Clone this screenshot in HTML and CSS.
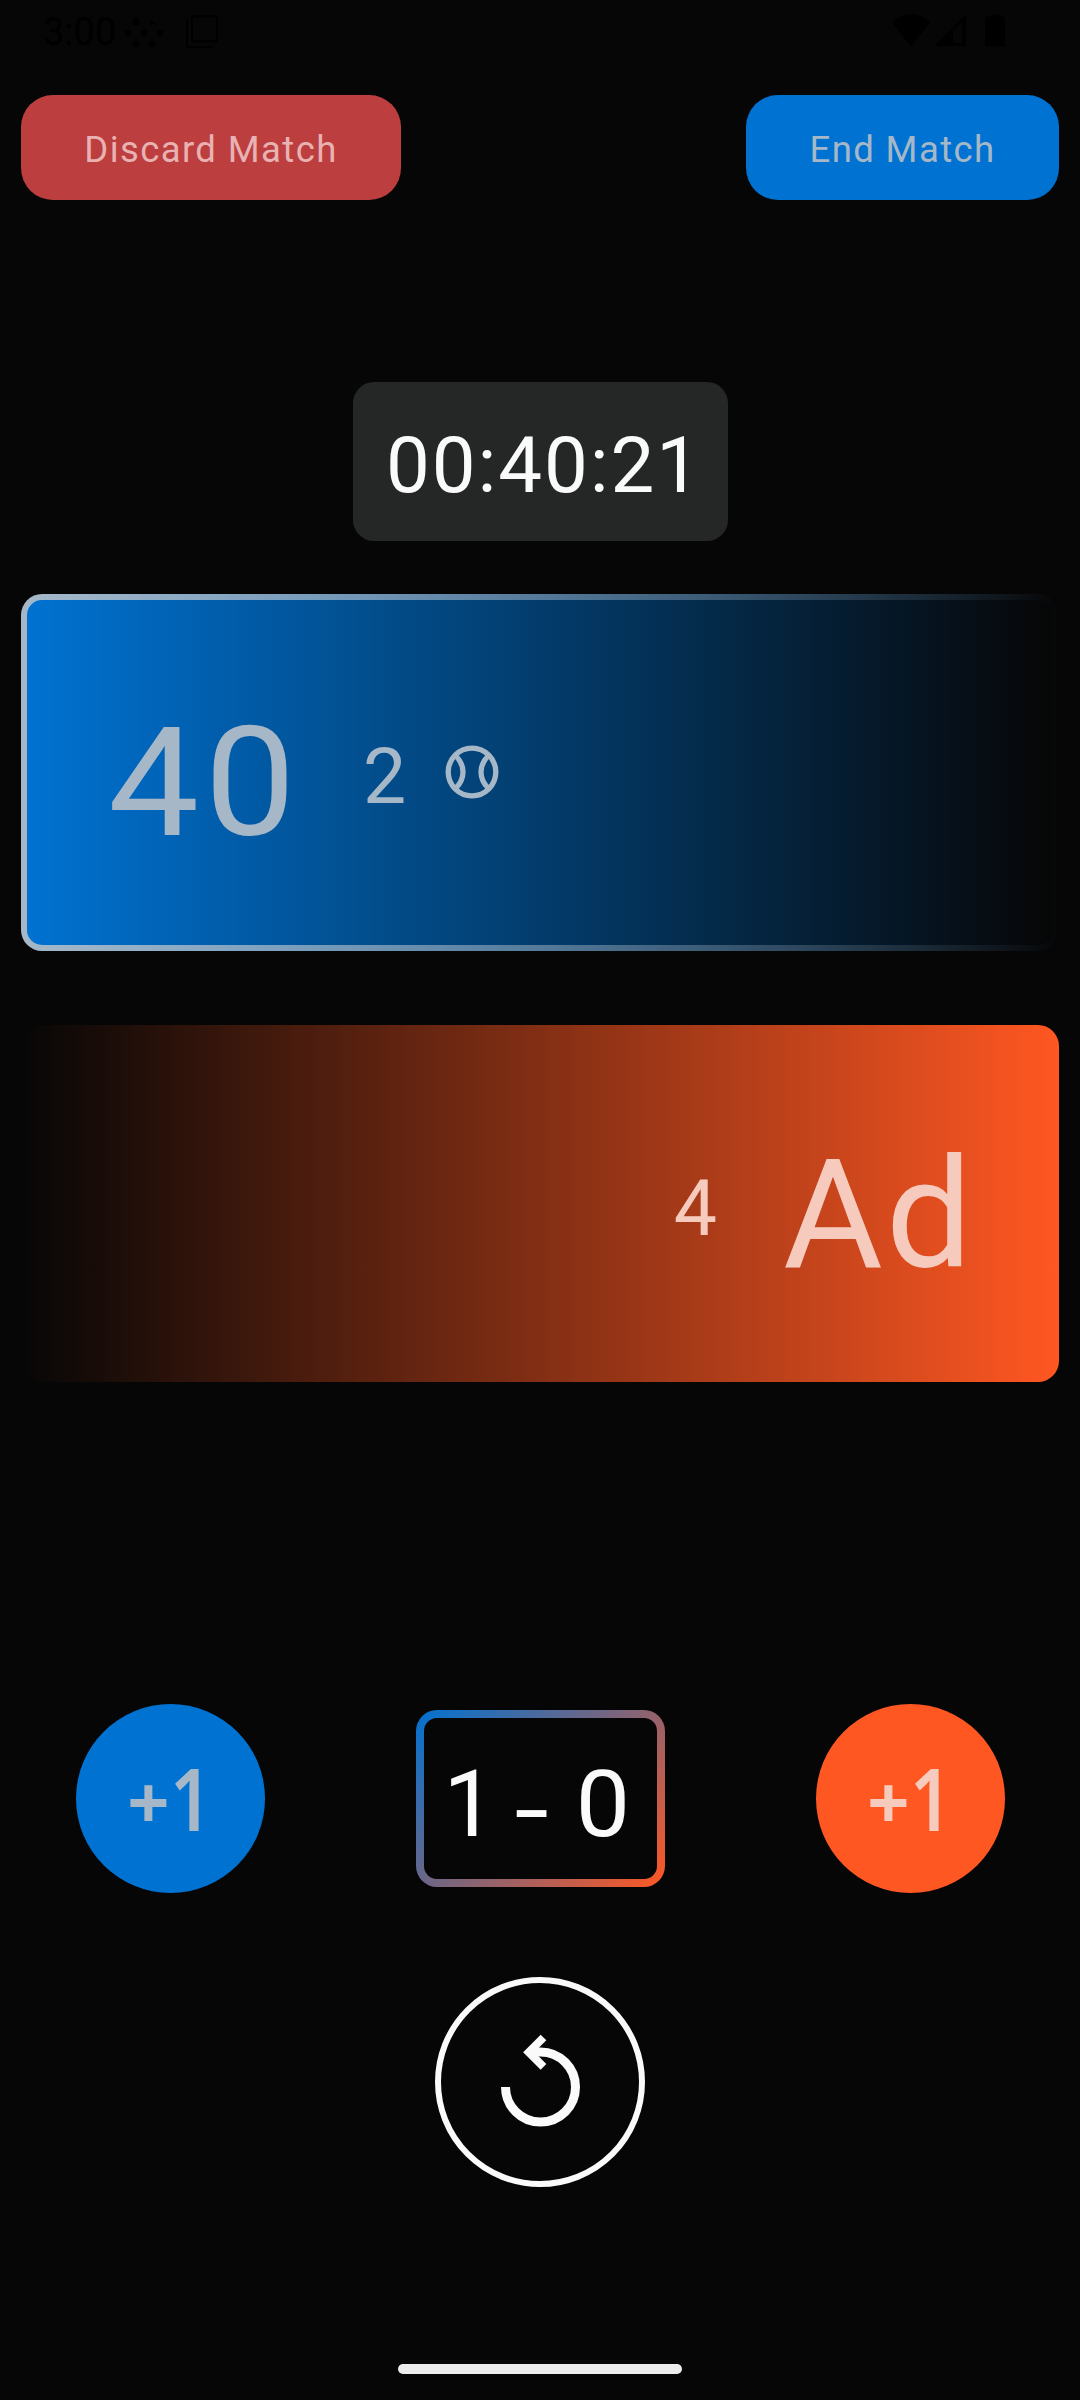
FILE: index.html
```html
<!DOCTYPE html>
<html lang="en">
<head>
<meta charset="utf-8">
<title>Match</title>
<link rel="stylesheet" href="styles.css">
</head>
<body>
<header class="status">
  <span class="clock">3:00</span>
  <svg class="dots" width="42" height="32" viewBox="0 0 42 32"><circle cx="5" cy="16" r="3.3"/><circle cx="21" cy="16" r="3.3"/><circle cx="37" cy="16" r="3.3"/><circle cx="13" cy="5" r="3.3"/><circle cx="13" cy="27" r="3.3"/><circle cx="29" cy="27" r="3.3"/><path d="M26 1l8 7-4-1-3 2 1-4z"/></svg>
  <svg class="copies" width="32" height="33" viewBox="0 0 32 33"><path d="M6 1.200h25v25h-25zM1 5v27h26" fill="none" stroke="#000" stroke-width="2"/></svg>
  <svg class="signals" width="114" height="34" viewBox="0 0 114 34"><path d="M0 9Q8 0 19 0T38 9L19 32zM42 32L74 0v32zM95 2.500h4V0h8v2.500h4q2 0 2 2v26q0 2-2 2H95q-2 0-2-2v-26q0-2 2-2z"/><path d="M61 17l9-9v21h-9z" fill="#060606"/></svg>
</header>
<nav class="actions">
  <button class="btn discard">Discard Match</button>
  <button class="btn end">End Match</button>
</nav>
<main>
  <div class="timer">00:40:21</div>
  <section class="card blue">
    <span class="points">40</span>
    <span class="games">2</span>
    <svg class="ball" width="54" height="54" viewBox="0 0 54 54"><g fill="none" stroke="#a6b8c8" stroke-width="5.300"><circle cx="27" cy="27" r="23.800"/><path d="M10.500 10.500Q18 18 18 27T10.500 43.500M43.500 10.500Q36 18 36 27T43.500 43.500"/></g></svg>
  </section>
  <section class="card orange">
    <span class="games">4</span>
    <span class="points">Ad</span>
  </section>
  <section class="controls">
    <button class="plus plus-blue"><span class="sign">+</span><span class="one">1</span></button>
    <div class="sets"><span>1</span><span class="dash">-</span><span class="away">0</span></div>
    <button class="plus plus-orange"><span class="sign">+</span><span class="one">1</span></button>
  </section>
  <button class="undo" aria-label="Undo"><svg width="80" height="94" viewBox="0 0 80 94"><g fill="none" stroke="#fafafa"><path d="M5.500 54A35 35 0 1 0 40.500 19H31" stroke-width="9"/><path d="M43.500 4.500L28.800 19.200L43.500 33.900" stroke-width="8"/></g></svg></button>
</main>
<div class="home"></div>
</body>
</html>
```
FILE: styles.css
```css
* { box-sizing: border-box; }
body { margin: 0; width: 1080px; height: 2400px; background: #060606; font-family: Roboto, sans-serif; color: #fafafa; display: flex; flex-direction: column; overflow: hidden; }
button { font: inherit; border: 0; padding: 0; margin: 0; }
svg { display: block; flex: none; }
.status { height: 95px; display: flex; align-items: flex-start; padding: 14px 74px 0 43px; color: #000; }
.clock { font-size: 38px; line-height: 36px; width: 80px; white-space: nowrap; }
.dots { margin-top: 3px; }
.copies { margin: 1px 0 0 21px; }
.signals { margin-left: auto; }
.actions { display: flex; justify-content: space-between; padding: 0 21px; }
.btn { height: 105px; border-radius: 32px; font-size: 36.500px; letter-spacing: 1.400px; padding-top: 3px; white-space: nowrap; }
.discard { width: 380px; background: #bc3e3f; color: #e9b2b2; }
.end { width: 313px; background: #0072d2; color: #a6b8c8; }
main { display: flex; flex-direction: column; align-items: center; padding: 182px 21px 0; }
.timer { width: 375px; height: 159px; border-radius: 21px; background: #252726; font-size: 78px; line-height: 168px; text-align: center; letter-spacing: 1.900px; padding-left: 8px; white-space: nowrap; }
.card { width: 1038px; height: 357px; border-radius: 21px; display: flex; }
.card.blue { margin-top: 53px; border: 6px solid transparent; background: linear-gradient(90deg, #0072d2, #060606) padding-box, linear-gradient(90deg, #a6b8c8, rgba(166, 184, 200, 0)) border-box, linear-gradient(90deg, #0072d2, #060606) border-box; color: #a6b8c8; }
.card.orange { margin-top: 74px; background: linear-gradient(90deg, #060606, #ff5722); color: #f6cbbe; justify-content: flex-end; }
.points { font-size: 153px; line-height: 180px; }
.games { font-size: 77px; line-height: 90px; }
.blue .points { width: 175px; margin: 93px 0 0 81px; letter-spacing: 5px; white-space: nowrap; transform: scaleX(1.060); transform-origin: 0 50%; }
.blue .games { width: 162px; padding-left: 80px; margin-top: 132px; }
.blue .ball { margin-top: 145px; }
.orange .games { margin-top: 139px; margin-right: 66px; }
.orange .points { width: 276px; margin-top: 100px; letter-spacing: 3px; }
.controls { display: flex; justify-content: space-between; align-items: center; width: 929px; height: 189px; margin-top: 322px; }
.plus { width: 189px; height: 189px; border-radius: 50%; display: flex; justify-content: center; font-family: "Noto Sans", sans-serif; font-size: 86px; line-height: 187px; font-weight: 600; }
.plus-blue { background: #0072d2; color: #a6b8c8; }
.plus-orange { background: #ff5722; color: #f6cbbe; }
.sign { font-size: 74px; line-height: 194px; font-weight: 700; }
.one { transform: scaleX(.850); transform-origin: 0 50%; margin-right: -6px; }
.sets { width: 249px; height: 177px; border: 8px solid transparent; border-radius: 21px; background: linear-gradient(#060606, #060606) padding-box, linear-gradient(135deg, #0072d2, #ff5722) border-box; font-size: 92px; line-height: 174px; display: flex; padding-left: 20px; }
.dash { margin: 6px 32px 0 24px; transform: scaleX(1.350); }
.away { transform: scaleX(1.050); }
.undo { width: 210px; height: 210px; margin-top: 84px; border: 6px solid #fafafa; border-radius: 50%; background: none; display: flex; justify-content: center; padding-top: 50px; }
.home { width: 284px; height: 10px; border-radius: 5px; background: #ececec; margin: 177px auto 0; }
```
